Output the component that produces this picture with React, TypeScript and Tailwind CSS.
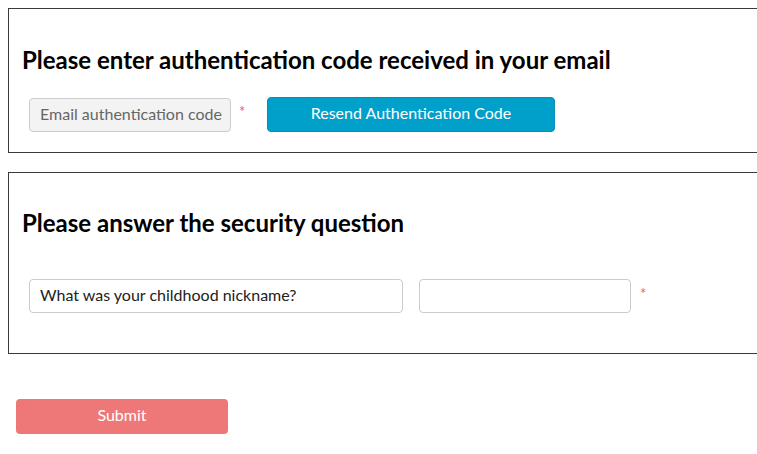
import React, { useState } from 'react';

export default function App() {
  const [code, setCode] = useState('');
  const [answer, setAnswer] = useState('');

  return (
    <div className="min-h-screen bg-white pt-2 font-['Lato',sans-serif] text-black overflow-hidden">
      {/* Email authentication */}
      <div className="ml-2 border-y border-l border-[#3a3a3a] pl-[13px] pt-[36px] pb-[20px]">
        <div className="text-[24px] font-bold leading-[29px]">
          Please enter authentication code received in your email
        </div>
        <div className="mt-[23px] flex flex-row items-center pl-[7px]">
          <input
            className="w-[202px] h-[34px] rounded bg-[#f3f3f3] border border-[#cccccc] pl-[10px] pr-[2px] pb-[3px] text-[16px] text-[#555] placeholder:text-[#666] outline-none"
            placeholder="Email authentication code"
            value={code}
            onChange={(e) => setCode(e.target.value)}
          />
          <span className="ml-[8px] w-[28px] text-[#f05a5a] text-[15px] self-start mt-[3px]">*</span>
          <button className="w-[288px] h-[35px] rounded bg-[#01a0ca] border border-[#0b8cb8] pb-[3px] text-white text-[16px]">
            Resend Authentication Code
          </button>
        </div>
      </div>

      {/* Security question */}
      <div className="mt-[19px] ml-2 border-y border-l border-[#3a3a3a] pl-[13px] pt-[35px] pb-[40px]">
        <div className="text-[24px] font-bold leading-[29px]">Please answer the security question</div>
        <div className="mt-[42px] flex flex-row items-center pl-[7px]">
          <input
            className="w-[374px] h-[34px] rounded bg-white border border-[#cccccc] pl-[10px] pr-[4px] pb-[3px] text-[16px] text-[#222] outline-none"
            value="What was your childhood nickname?"
            readOnly
          />
          <input
            className="ml-[16px] w-[212px] h-[34px] rounded bg-white border border-[#cccccc] px-[10px] pb-[3px] text-[16px] outline-none"
            value={answer}
            onChange={(e) => setAnswer(e.target.value)}
          />
          <span className="ml-[9px] text-[#f05a5a] text-[15px] self-start mt-[3px]">*</span>
        </div>
      </div>

      <div className="mt-[45px] pl-4">
        <button className="w-[212px] h-[35px] rounded bg-[#ee7877] pb-[3px] text-white text-[16px]">Submit</button>
      </div>
    </div>
  );
}
